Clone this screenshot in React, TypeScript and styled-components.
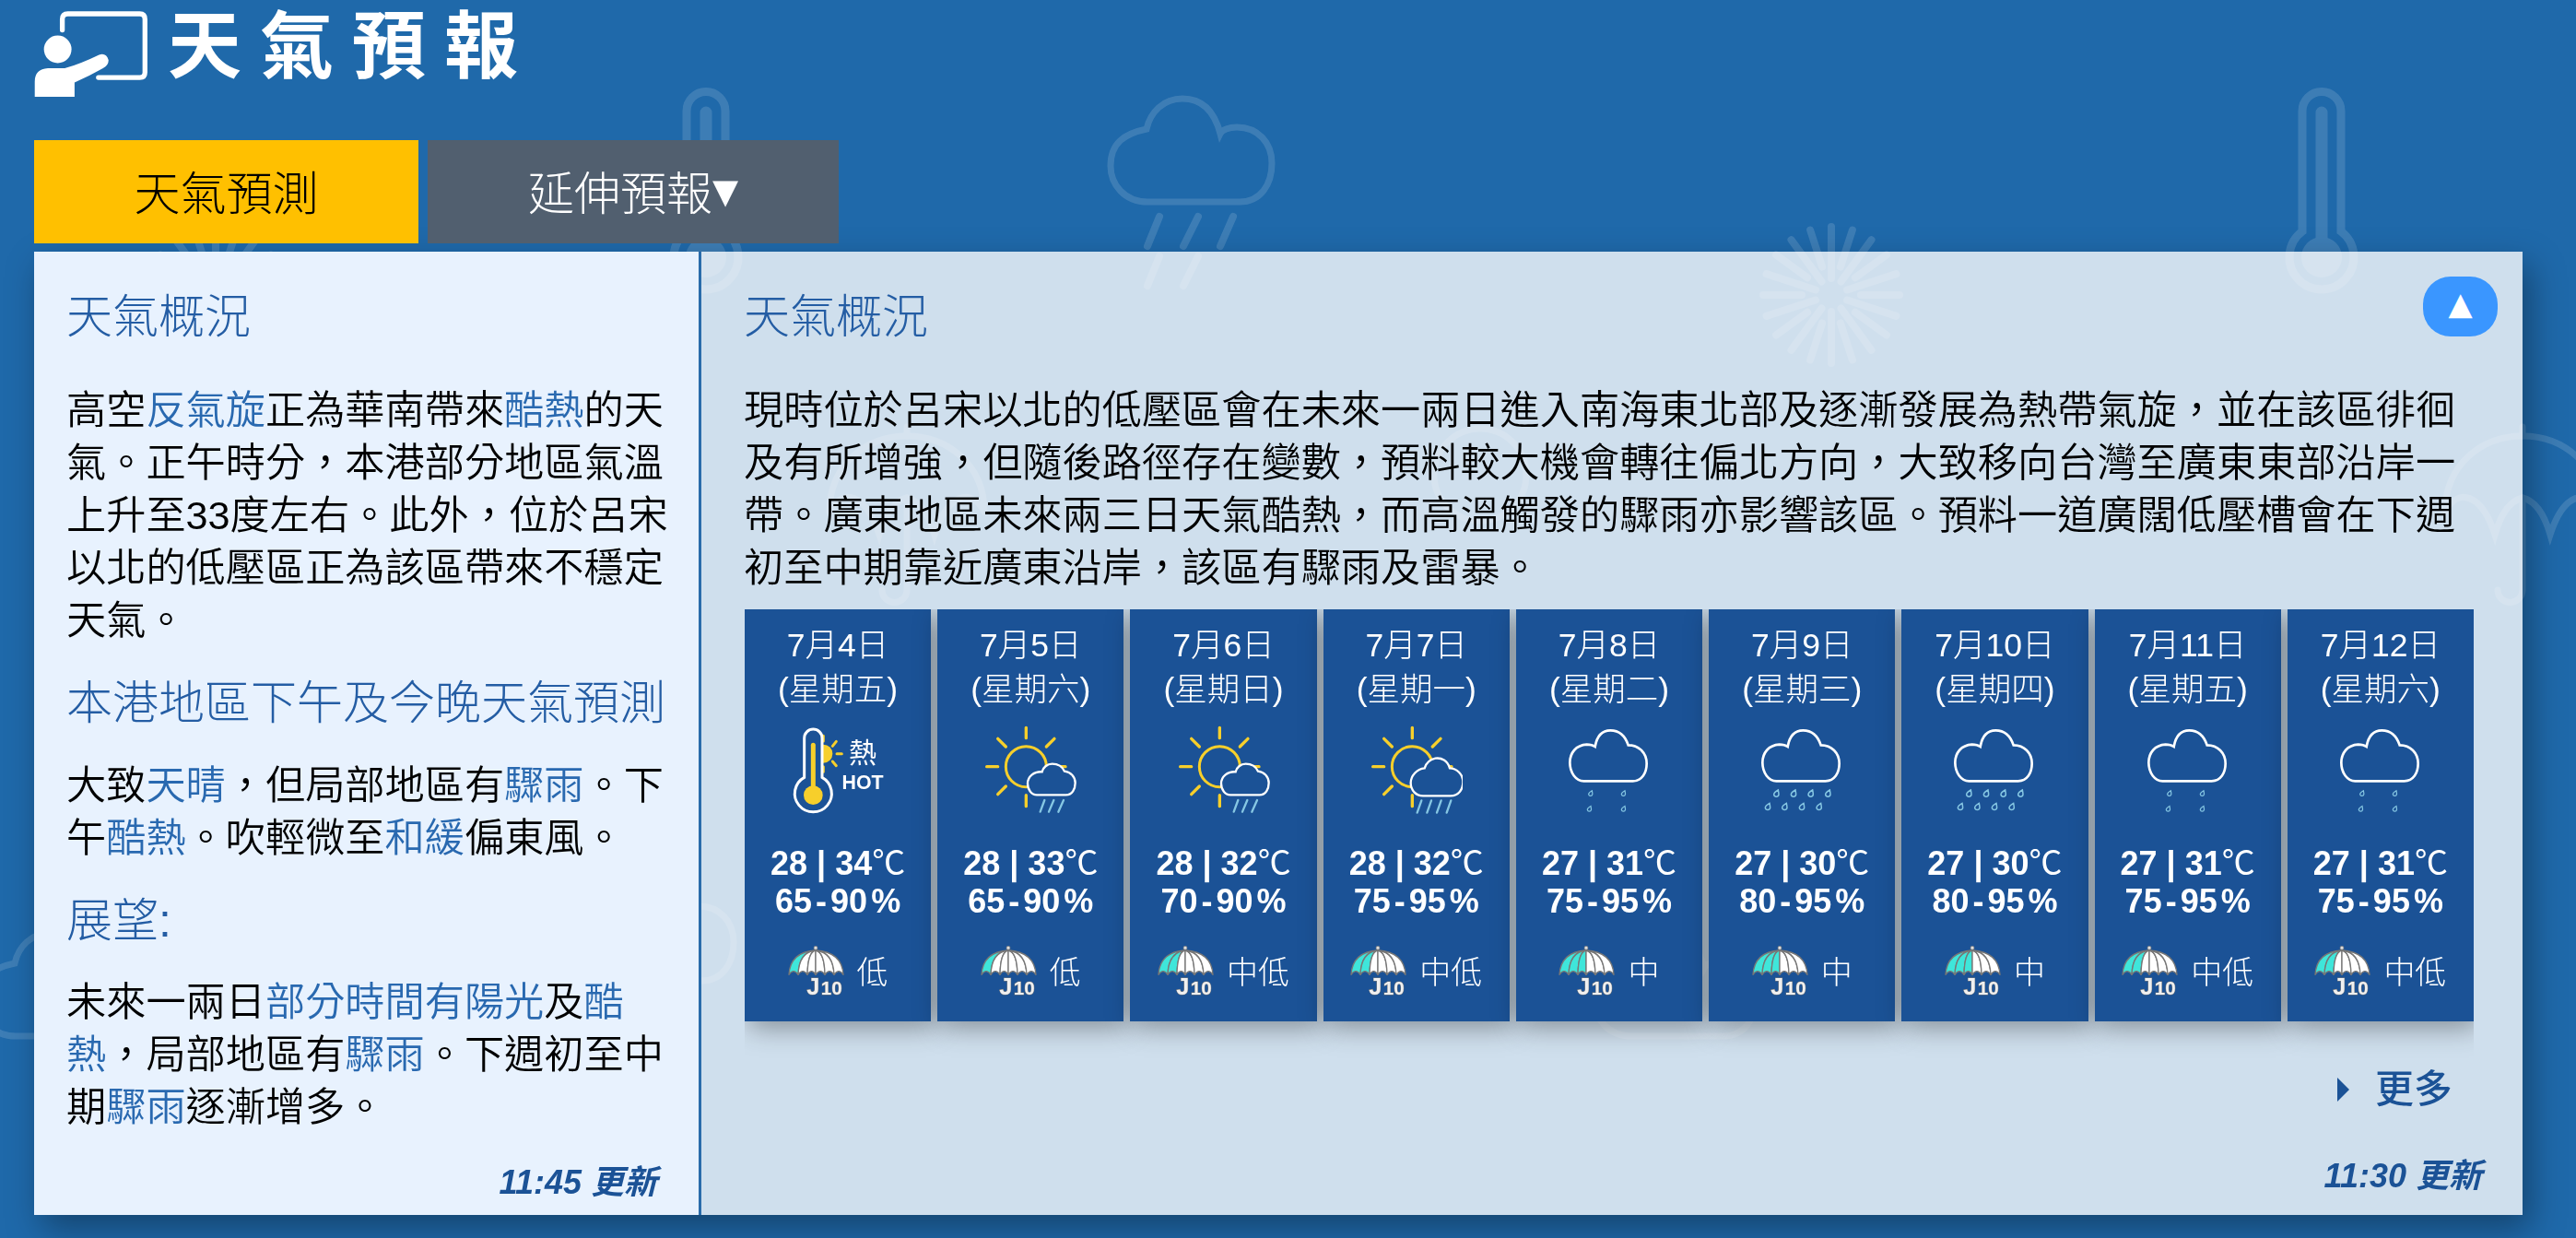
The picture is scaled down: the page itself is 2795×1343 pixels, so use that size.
import React from "react";
import styled, { createGlobalStyle } from "styled-components";

const SANS = `"Liberation Sans", "Noto Sans CJK TC", sans-serif`;

const Global = createGlobalStyle`
  html, body { margin: 0; padding: 0; background: #1f69aa; }
  body { font-family: ${SANS}; overflow: hidden; }
  * { box-sizing: border-box; }
`;

const Page = styled.div`
  position: relative;
  width: 2795px;
  height: 1343px;
  padding-left: 37px;
  overflow: hidden;
  background: #1f69aa;
`;
const Watermark = styled.svg`
  position: absolute;
  left: 0;
  top: 0;
  width: 2795px;
  height: 1343px;
`;
const Content = styled.div`
  position: relative;
  width: 2700px;
`;
const Header = styled.header`
  display: flex;
  align-items: flex-start;
  height: 152px;
  padding-top: 12px;
`;
const Logo = styled.svg`
  width: 123px;
  height: 93px;
  flex: none;
`;
const Title = styled.h1`
  margin: -16px 0 0 22px;
  font-size: 80px;
  line-height: 110px;
  font-weight: 700;
  letter-spacing: 20px;
  color: #fff;
`;
const Tabs = styled.nav`
  display: flex;
  gap: 10px;
  height: 112px;
  margin-bottom: 9px;
`;
const Tab = styled.div<{ $active?: boolean }>`
  display: flex;
  align-items: center;
  justify-content: center;
  width: ${(p) => (p.$active ? 417 : 446)}px;
  padding-bottom: 5px;
  font-size: 50px;
  font-weight: 300;
  background: ${(p) => (p.$active ? "#ffc000" : "#515f6f")};
  color: ${(p) => (p.$active ? "#000" : "#fff")};
`;
const Caret = styled.span`
  font-family: "DejaVu Sans", sans-serif;
  font-size: 56px;
  line-height: 1;
`;
const Panels = styled.main`
  display: flex;
  height: 1045px;
  box-shadow: 8px 15px 35px rgba(0, 0, 0, 0.35);
`;
const Summary = styled.section`
  display: flex;
  flex-direction: column;
  flex: 0 0 721px;
  padding: 43px 33px 15px 35px;
  background: #e8f2fe;
`;
const Outlook = styled.section`
  position: relative;
  display: flex;
  flex-direction: column;
  flex: 1;
  min-width: 0;
  padding: 43px 53px 22px 46px;
  border-left: 3px solid #2a6cab;
  background: rgba(255, 255, 255, 0.79);
`;
const Heading = styled.h2<{ $gap?: number }>`
  margin: ${(p) => p.$gap ?? 0}px 0 0;
  font-size: 50px;
  line-height: 57px;
  font-weight: 300;
  color: #245da4;
`;
const Para = styled.p<{ $gap: number }>`
  margin: ${(p) => p.$gap}px 0 0;
  font-size: 43.2px;
  line-height: 57px;
  font-weight: 350;
  color: #000;
`;
const Term = styled.span`
  color: #2969b0;
`;
const Updated = styled.div<{ $shift: number }>`
  margin-top: auto;
  margin-right: ${(p) => p.$shift}px;
  text-align: right;
  font-size: 36px;
  line-height: 40px;
  font-weight: 700;
  font-style: italic;
  color: #1b5296;
`;
const Collapse = styled.button`
  position: absolute;
  top: 27px;
  right: 27px;
  display: flex;
  align-items: center;
  justify-content: center;
  width: 81px;
  height: 65px;
  padding: 0 0 7px;
  border: 0;
  border-radius: 30px;
  background: #3a96ff;
  color: #fff;
  font-size: 34px;
  line-height: 1;
  font-family: "DejaVu Sans", sans-serif;
`;
const CardClip = styled.div`
  overflow: hidden;
  margin: 16px 0 0 1px;
  padding-bottom: 45px;
`;
const CardRow = styled.div`
  display: grid;
  grid-template-columns: repeat(9, 1fr);
  gap: 7px;
`;
const Card = styled.article`
  display: flex;
  flex-direction: column;
  align-items: center;
  height: 447px;
  padding-top: 15px;
  background: #1b5296;
  color: #fff;
  box-shadow: 5px 6px 28px rgba(0, 0, 0, 0.38);
`;
const DateText = styled.div`
  font-size: 35.5px;
  line-height: 48px;
  font-weight: 300;
  text-align: center;
  white-space: nowrap;
`;
const WxIcon = styled.svg`
  display: block;
  width: 100px;
  height: 100px;
  margin-top: 14px;
  flex: none;
`;
const Temp = styled.div`
  margin-top: 30px;
  font-size: 36px;
  line-height: 41px;
  font-weight: 700;
  white-space: nowrap;
`;
const Degree = styled.span`
  font-weight: 400;
`;
const Humidity = styled.div`
  font-size: 36px;
  line-height: 41px;
  font-weight: 700;
  word-spacing: -6px;
  white-space: nowrap;
`;
const RainRow = styled.div`
  display: flex;
  align-items: center;
  gap: 15px;
  margin-top: 28px;
`;
const RainLabel = styled.span`
  padding-top: 5px;
  font-size: 34px;
  line-height: 49px;
  font-weight: 300;
`;
const UmbrellaSvg = styled.svg`
  width: 60px;
  height: 54px;
  flex: none;
  overflow: visible;
`;
const More = styled.div`
  display: flex;
  align-items: center;
  justify-content: flex-end;
  padding-right: 23px;
  font-size: 42px;
  line-height: 58px;
  font-weight: 500;
  color: #1b5296;
`;
const MoreArrow = styled.span`
  width: 0;
  height: 0;
  margin-right: 28px;
  border-style: solid;
  border-width: 13px 0 13px 13px;
  border-color: transparent transparent transparent #1b5296;
`;

const Snow = ({ x, y }: { x: number; y: number }) => (
  <g transform={`translate(${x} ${y})`} strokeWidth={8} strokeLinecap="round">
    {Array.from({ length: 20 }, (_, i) => (
      <line key={i} x1={0} y1={i % 2 ? -32 : -18} x2={0} y2={-74} transform={`rotate(${i * 18})`} />
    ))}
  </g>
);
const Thermo = ({ x }: { x: number }) => (
  <g transform={`translate(${x} 0)`}>
    <path d="M-21 251V120.5a21 21 0 0 1 42 0V251a35 35 0 1 1-42 0Z" strokeWidth={9} />
    <path d="M0 122V262" strokeWidth={13} strokeLinecap="round" />
    <circle cx={0} cy={279} r={22} fill="#fff" stroke="none" />
  </g>
);
const WmUmbrella = ({ x }: { x: number }) => (
  <g transform={`translate(${x} 0)`} strokeWidth={7} strokeLinecap="round">
    <path d="M-84 555C-84 505-45 473 0 473C45 473 84 505 84 555" />
    <path d="M-84 555Q-70 530-50 545Q-38 555-30 580Q-20 545 0 540Q20 545 30 580Q38 555 50 545Q70 530 84 555" />
    <path d="M0 473V463M0 540V640a13.5 13.5 0 0 1-27 0" />
  </g>
);
const WM_CLOUD =
  "M1245 219H1345C1368 219 1380 200 1380 177C1380 155 1365 138 1342 138C1333 138 1326 141 1324 145C1318 122 1305 107 1283 107C1262 107 1248 122 1244 140C1220 145 1205 155 1205 180C1205 200 1220 219 1245 219Z";

const Backdrop = () => (
  <Watermark viewBox="0 0 2795 1343" aria-hidden="true">
    <g fill="none" stroke="#fff" opacity={0.14}>
      <Thermo x={766} />
      <Thermo x={2519} />
      <Snow x={234} y={320} />
      <Snow x={1987} y={320} />
      <path d={WM_CLOUD} strokeWidth={7} />
      <path
        d="M1258 235L1245 267M1300 235L1284 267M1338 235L1324 267M1258 278L1245 310M1300 278L1284 310"
        strokeWidth={8}
        strokeLinecap="round"
      />
      <WmUmbrella x={2737} />
      <WmUmbrella x={984} />
      <circle cx={1606} cy={515} r={50} strokeWidth={7} />
      <path d={WM_CLOUD} strokeWidth={7} transform="translate(-1228 905)" />
      <path d={WM_CLOUD} strokeWidth={7} transform="translate(525 905)" />
      <path d={WM_CLOUD} strokeWidth={7} transform="translate(-584 845)" />
    </g>
  </Watermark>
);

const TeacherLogo = () => (
  <Logo viewBox="50 35 370 280" aria-hidden="true">
    <path
      d="M142 97V62Q142 44 160 44H395Q412 44 412 62V235Q412 252 395 252H260"
      fill="none"
      stroke="#fff"
      strokeWidth={16}
      strokeLinecap="round"
    />
    <circle cx={127} cy={160} r={45} fill="#fff" />
    <path
      d="M52 315V265Q52 225 95 222H150Q200 208 262 178Q285 170 293 195Q293 212 275 222Q230 248 182 268V315Z"
      fill="#fff"
    />
  </Logo>
);

const CARD = "#1b5296";
const SUN = "#f7cf2b";
const RAIN = "#86c7e3";

const HotIcon = () => (
  <WxIcon viewBox="27 18 300 300" aria-hidden="true">
    <g stroke={SUN} strokeWidth={9} strokeLinecap="round">
      <path d="M130 55V72M130 155V172M160 88L172 73M160 138L172 152M174 113H190" />
    </g>
    <circle cx={130} cy={113} r={30} fill={SUN} />
    <path
      d="M68 190V62a29 29 0 0 1 58 0V190A60 60 0 1 1 68 190Z"
      fill={CARD}
      stroke="#fff"
      strokeWidth={9}
    />
    <path d="M97 85V225" stroke={SUN} strokeWidth={15} strokeLinecap="round" />
    <circle cx={97} cy={248} r={31} fill={SUN} />
    <text x={258} y={142} fontSize={90} fill="#fff" textAnchor="middle" fontFamily={SANS}>
      熱
    </text>
    <text x={258} y={227} fontSize={64} fontWeight={700} fill="#fff" textAnchor="middle" fontFamily={SANS}>
      HOT
    </text>
  </WxIcon>
);

const SunRainIcon = ({ heavy }: { heavy?: boolean }) => (
  <WxIcon viewBox="654 18 300 300" aria-hidden="true">
    <g stroke={SUN} strokeWidth={10} strokeLinecap="round">
      <path d="M790 28V62M662 155H698M882 155H918M790 248V284M698 64L724 90M882 64L856 90M698 245L724 219" />
    </g>
    <circle cx={790} cy={155} r={66} fill="none" stroke={SUN} strokeWidth={9} />
    <path
      d={
        heavy
          ? "M825 250H915C940 250 955 230 955 205C955 180 935 160 912 160C905 135 885 125 865 128C845 132 835 145 830 160C805 162 785 185 785 208C785 232 802 250 825 250Z"
          : "M825 247H920C940 247 950 228 950 208C950 188 935 172 915 170C908 155 895 146 875 146C858 146 845 158 842 172C815 170 795 188 795 210C795 230 808 247 825 247Z"
      }
      fill={CARD}
      stroke="#fff"
      strokeWidth={7}
    />
    <path
      d={
        heavy
          ? "M820 265L806 305M852 265L838 305M884 265L870 305M916 265L902 305"
          : "M850 264L836 302M880 264L864 302M912 264L895 302"
      }
      stroke={RAIN}
      strokeWidth={7}
      strokeLinecap="round"
    />
  </WxIcon>
);

const Drop = ({ x, y, s }: { x: number; y: number; s: number }) => (
  <path
    transform={`translate(${x} ${y}) scale(${s})`}
    d="M5-11C5-11-9-3-9 4A8.2 8.2 0 0 0 7 4C7-1 5-11 5-11Z"
    fill={CARD}
    stroke={RAIN}
    strokeWidth={4.5}
  />
);

const CloudIcon = ({ heavy }: { heavy?: boolean }) => {
  const light: [number, number][] = [
    [-60, 362],
    [47, 362],
    [-64, 412],
    [47, 412],
  ];
  const dense: [number, number][] = [
    [-82, 362],
    [-26, 362],
    [30, 362],
    [86, 362],
    [-110, 405],
    [-55, 405],
    [1, 405],
    [57, 405],
  ];
  return (
    <WxIcon viewBox="-150 138 300 300" aria-hidden="true">
      <path
        transform="translate(-318 0)"
        d="M235 322H395C425 322 440 295 440 265C440 230 415 205 380 205C370 175 350 157 322 157C295 157 278 175 272 210C265 205 255 203 245 203C210 205 190 230 190 262C190 295 210 322 235 322Z"
        fill="none"
        stroke="#fff"
        strokeWidth={8}
      />
      {(heavy ? dense : light).map(([x, y]) => (
        <Drop key={`${x}-${y}`} x={x} y={y} s={heavy ? 1 : 0.8} />
      ))}
    </WxIcon>
  );
};

const BOTTOMS = [18, 48, 78, 105, 135, 165, 195];

const Umbrella = ({ teal }: { teal: number }) => (
  <UmbrellaSvg viewBox="15 18 180 162" aria-hidden="true">
    <circle cx={105} cy={25} r={6} fill="#ddd" stroke="#777" strokeWidth={2} />
    {BOTTOMS.slice(0, 6).map((a, i) => {
      const b = BOTTOMS[i + 1];
      const ca = 105 + (a - 105) * 0.95;
      const cb = 105 + (b - 105) * 0.95;
      return (
        <path
          key={a}
          d={`M105 33Q${ca} 38 ${a} 112Q${(a + b) / 2} 90 ${b} 112Q${cb} 38 105 33Z`}
          fill={i < teal ? "#3fe6da" : "#fff"}
          stroke="#777"
          strokeWidth={4}
          strokeLinejoin="round"
        />
      );
    })}
    <text x={76} y={176} fontSize={76} fontWeight={700} fill="#f0f0f0" stroke="#777" strokeWidth={3} paintOrder="stroke" fontFamily={SANS}>
      J
    </text>
    <text x={122} y={176} fontSize={62} fontWeight={700} fill="#f0f0f0" stroke="#777" strokeWidth={3} paintOrder="stroke" fontFamily={SANS}>
      10
    </text>
  </UmbrellaSvg>
);

type Day = {
  date: string;
  week: string;
  icon: React.ReactNode;
  temp: string;
  rh: string;
  rain: string;
  teal: number;
};

const DAYS: Day[] = [
  { date: "7月4日", week: "(星期五)", icon: <HotIcon />, temp: "28 | 34", rh: "65 - 90 %", rain: "低", teal: 1 },
  { date: "7月5日", week: "(星期六)", icon: <SunRainIcon />, temp: "28 | 33", rh: "65 - 90 %", rain: "低", teal: 1 },
  { date: "7月6日", week: "(星期日)", icon: <SunRainIcon />, temp: "28 | 32", rh: "70 - 90 %", rain: "中低", teal: 2 },
  { date: "7月7日", week: "(星期一)", icon: <SunRainIcon heavy />, temp: "28 | 32", rh: "75 - 95 %", rain: "中低", teal: 2 },
  { date: "7月8日", week: "(星期二)", icon: <CloudIcon />, temp: "27 | 31", rh: "75 - 95 %", rain: "中", teal: 3 },
  { date: "7月9日", week: "(星期三)", icon: <CloudIcon heavy />, temp: "27 | 30", rh: "80 - 95 %", rain: "中", teal: 3 },
  { date: "7月10日", week: "(星期四)", icon: <CloudIcon heavy />, temp: "27 | 30", rh: "80 - 95 %", rain: "中", teal: 3 },
  { date: "7月11日", week: "(星期五)", icon: <CloudIcon />, temp: "27 | 31", rh: "75 - 95 %", rain: "中低", teal: 2 },
  { date: "7月12日", week: "(星期六)", icon: <CloudIcon />, temp: "27 | 31", rh: "75 - 95 %", rain: "中低", teal: 2 },
];

export default function App() {
  return (
    <Page>
      <Global />
      <Backdrop />
      <Content>
        <Header>
          <TeacherLogo />
          <Title>天氣預報</Title>
        </Header>
        <Tabs>
          <Tab $active>天氣預測</Tab>
          <Tab>
            延伸預報<Caret>▾</Caret>
          </Tab>
        </Tabs>
        <Panels>
          <Summary>
            <Heading>天氣概況</Heading>
            <Para $gap={44}>
              高空<Term>反氣旋</Term>正為華南帶來<Term>酷熱</Term>的天氣。正午時分，本港部分地區氣溫上升至33度左右。此外，位於呂宋以北的低壓區正為該區帶來不穩定天氣。
            </Para>
            <Heading $gap={33}>本港地區下午及今晚天氣預測</Heading>
            <Para $gap={32}>
              大致<Term>天晴</Term>，但局部地區有<Term>驟雨</Term>。下午<Term>酷熱</Term>。吹輕微至<Term>和緩</Term>偏東風。
            </Para>
            <Heading $gap={33}>展望:</Heading>
            <Para $gap={31}>
              未來一兩日<Term>部分時間有陽光</Term>及<Term>酷熱</Term>，局部地區有<Term>驟雨</Term>。下週初至中期<Term>驟雨</Term>逐漸增多。
            </Para>
            <Updated $shift={12}>11:45 更新</Updated>
          </Summary>
          <Outlook>
            <Collapse type="button">▲</Collapse>
            <Heading>天氣概況</Heading>
            <Para $gap={44}>
              現時位於呂宋以北的低壓區會在未來一兩日進入南海東北部及逐漸發展為熱帶氣旋，並在該區徘徊及有所增強，但隨後路徑存在變數，預料較大機會轉往偏北方向，大致移向台灣至廣東東部沿岸一帶。廣東地區未來兩三日天氣酷熱，而高溫觸發的驟雨亦影響該區。預料一道廣闊低壓槽會在下週初至中期靠近廣東沿岸，該區有驟雨及雷暴。
            </Para>
            <CardClip>
              <CardRow>
                {DAYS.map((d) => (
                  <Card key={d.date}>
                    <DateText>
                      {d.date}
                      <br />
                      {d.week}
                    </DateText>
                    {d.icon}
                    <Temp>
                      {d.temp}
                      <Degree>℃</Degree>
                    </Temp>
                    <Humidity>{d.rh}</Humidity>
                    <RainRow>
                      <Umbrella teal={d.teal} />
                      <RainLabel>{d.rain}</RainLabel>
                    </RainRow>
                  </Card>
                ))}
              </CardRow>
            </CardClip>
            <More>
              <MoreArrow />
              更多
            </More>
            <Updated $shift={-9}>11:30 更新</Updated>
          </Outlook>
        </Panels>
      </Content>
    </Page>
  );
}
